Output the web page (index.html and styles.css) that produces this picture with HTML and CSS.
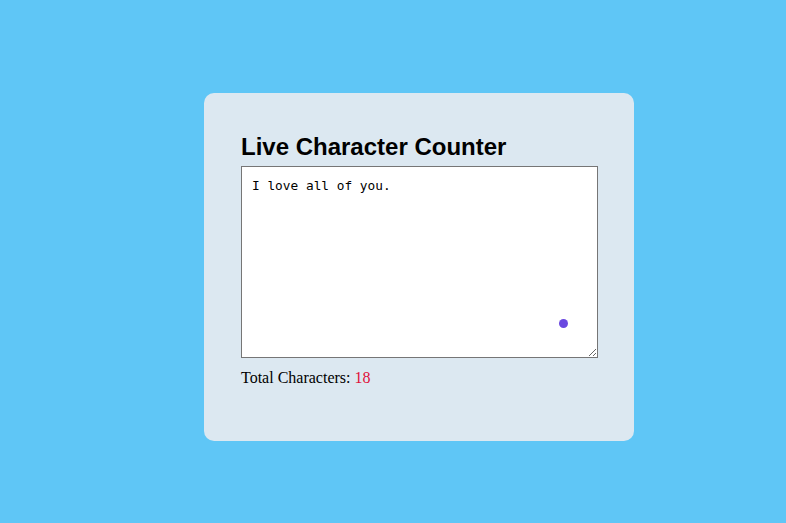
FILE: index.html
```html
<!DOCTYPE html>
<html>
<head>
<meta charset="utf-8">
<link rel="stylesheet" href="styles.css">
</head>
<body>
<div class="card">
  <h2 class="title">Live Character Counter</h2>
  <div class="field">
    <textarea class="input">I love all of you.</textarea>
    <span class="cursor-dot"></span>
  </div>
  <p class="count">Total Characters: <span class="num">18</span></p>
</div>
</body>
</html>
```
FILE: styles.css
```css
html, body { margin: 0; }
body {
  background: #5fc6f6;
  width: 786px;
  height: 523px;
  padding: 93px 0 0 204px;
  box-sizing: border-box;
  font-family: "Liberation Serif", serif;
}
.card {
  width: 430px;
  height: 348px;
  box-sizing: border-box;
  background: #dce8f1;
  border-radius: 10px;
  padding: 40px 36px 0 37px;
}
.title {
  margin: 0 0 5px 0;
  font-family: "Liberation Sans", Arial, sans-serif;
  font-size: 24px;
  font-weight: bold;
  color: #000;
}
.field { position: relative; width: 357px; }
.input {
  display: block;
  width: 357px;
  height: 192px;
  box-sizing: border-box;
  margin: 0;
  padding: 11px 10px;
  border: 1px solid #767676;
  font-family: "DejaVu Sans Mono", monospace;
  font-size: 12.8px;
  color: #000;
  background: #fff;
}
.cursor-dot {
  position: absolute;
  left: 318px;
  top: 153px;
  width: 9px;
  height: 9px;
  border-radius: 50%;
  background: #6a48e0;
}
.count {
  margin: 11px 0 0 0;
  font-size: 16px;
  color: #000;
}
.num { color: #e0103a; }
```
